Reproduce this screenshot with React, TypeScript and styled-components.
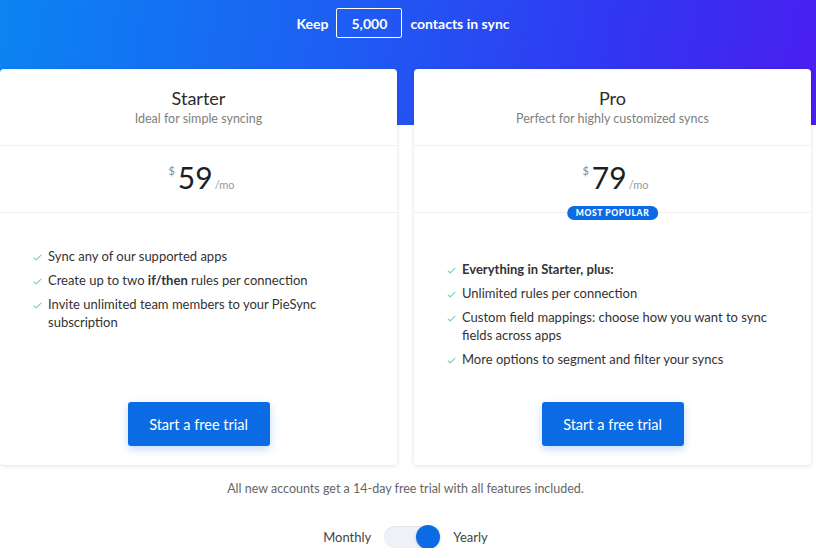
import * as React from "react";
import styled, { createGlobalStyle } from "styled-components";

type Plan = {
  name: string;
  tagline: string;
  price: number;
  popular?: boolean;
  features: React.ReactNode[];
};

const plans: Plan[] = [
  {
    name: "Starter",
    tagline: "Ideal for simple syncing",
    price: 59,
    features: [
      "Sync any of our supported apps",
      <>
        Create up to two <b>if/then</b> rules per connection
      </>,
      "Invite unlimited team members to your PieSync subscription",
    ],
  },
  {
    name: "Pro",
    tagline: "Perfect for highly customized syncs",
    price: 79,
    popular: true,
    features: [
      <b>Everything in Starter, plus:</b>,
      "Unlimited rules per connection",
      "Custom field mappings: choose how you want to sync fields across apps",
      "More options to segment and filter your syncs",
    ],
  },
];

const Check = () => (
  <CheckIcon width="9" height="7" viewBox="0 0 9 7">
    <polyline
      points="0.8,3.6 3.2,5.9 8.3,0.9"
      fill="none"
      stroke="#7fd3b0"
      strokeWidth="1.1"
    />
  </CheckIcon>
);

const App = () => {
  const [yearly, setYearly] = React.useState(true);

  return (
    <>
      <GlobalStyle />
      <Banner>
        <SyncLine>
          Keep <CountInput defaultValue="5,000" /> contacts in sync
        </SyncLine>
      </Banner>
      <Cards>
        {plans.map((plan) => (
          <Card key={plan.name}>
            <CardHead>
              <PlanName>{plan.name}</PlanName>
              <Tagline>{plan.tagline}</Tagline>
            </CardHead>
            <PriceRow>
              <Currency>$</Currency>
              <Amount>{plan.price}</Amount>
              <Period>/mo</Period>
              {plan.popular && <Badge>MOST POPULAR</Badge>}
            </PriceRow>
            <CardBody>
              <Features offset={plan.popular ? 47 : 34}>
                {plan.features.map((feature, i) => (
                  <Feature key={i}>
                    <Check />
                    <span>{feature}</span>
                  </Feature>
                ))}
              </Features>
              <TrialButton>Start a free trial</TrialButton>
            </CardBody>
          </Card>
        ))}
      </Cards>
      <Note>All new accounts get a 14-day free trial with all features included.</Note>
      <Billing>
        <span>Monthly</span>
        <Switch on={yearly} onClick={() => setYearly(!yearly)}>
          <Knob on={yearly} />
        </Switch>
        <span>Yearly</span>
      </Billing>
    </>
  );
};

const GlobalStyle = createGlobalStyle`
  body {
    margin: 0;
    background: #fff;
    font-family: Lato, "Open Sans", sans-serif;
    color: #333;
    overflow: hidden;
  }
`;

const Banner = styled.div`
  height: 125px;
  background: linear-gradient(100deg, #0b84f2 0%, #1d5ff3 40%, #3236f2 75%, #4a1ef0 100%);
  display: flex;
  justify-content: center;
  padding: 8px 10px 0 0;
  box-sizing: border-box;
`;

const SyncLine = styled.div`
  display: flex;
  align-items: center;
  height: 30px;
  gap: 8px;
  color: #fff;
  font-size: 14px;
  font-weight: 700;
`;

const CountInput = styled.input`
  width: 66px;
  height: 30px;
  box-sizing: border-box;
  border: 1px solid #fff;
  border-radius: 2px;
  background: transparent;
  color: #fff;
  font-family: inherit;
  font-size: 14px;
  font-weight: 700;
  text-align: center;
  outline: none;
`;

const Cards = styled.div`
  width: 811px;
  margin-top: -56px;
  display: grid;
  grid-template-columns: 397px 397px;
  column-gap: 17px;
`;

const Card = styled.div`
  background: #fff;
  border-radius: 4px;
  box-shadow: 0 1px 4px rgba(0, 0, 0, 0.13);
  display: flex;
  flex-direction: column;
  height: 396px;
`;

const CardHead = styled.div`
  text-align: center;
  padding: 18px 0 16px;
  border-bottom: 1px solid #f0f0f0;
`;

const PlanName = styled.div`
  font-size: 18px;
  line-height: 22px;
  color: #2b2b2b;
`;

const Tagline = styled.div`
  font-size: 12.5px;
  line-height: 20px;
  color: #808080;
`;

const PriceRow = styled.div`
  position: relative;
  height: 66px;
  display: flex;
  justify-content: center;
  align-items: center;
  border-bottom: 1px solid #f0f0f0;
  padding-left: 6px;
`;

const Currency = styled.span`
  font-size: 11px;
  color: #888;
  align-self: flex-start;
  margin-top: 18px;
  margin-right: 3px;
`;

const Amount = styled.span`
  font-size: 30px;
  font-weight: 400;
  color: #1f1f1f;
  margin-top: -4px;
`;

const Period = styled.span`
  font-size: 11px;
  color: #999;
  margin-top: 10px;
  margin-left: 2px;
`;

const Badge = styled.span`
  position: absolute;
  left: 50%;
  bottom: -8px;
  transform: translateX(-50%);
  background: #0a6be4;
  color: #fff;
  font-size: 8.5px;
  font-weight: 900;
  letter-spacing: 0.6px;
  line-height: 14px;
  padding: 0 9px;
  border-radius: 8px;
  white-space: nowrap;
`;

const CardBody = styled.div`
  flex: 1;
  display: flex;
  flex-direction: column;
  align-items: center;
  padding-bottom: 19px;
`;

const Features = styled.ul<{ offset: number }>`
  list-style: none;
  margin: 0;
  padding: ${(props) => props.offset}px 30px 0 33px;
  align-self: stretch;
  display: flex;
  flex-direction: column;
  gap: 6px;
`;

const Feature = styled.li`
  display: flex;
  align-items: flex-start;
  gap: 6px;
  font-size: 13px;
  line-height: 18px;
  color: #333;

  b {
    font-weight: 700;
  }
`;

const CheckIcon = styled.svg`
  flex: none;
  margin-top: 7px;
`;

const TrialButton = styled.button`
  margin-top: auto;
  width: 142px;
  height: 44px;
  border: none;
  border-radius: 3px;
  background: #0a6be4;
  color: #fff;
  font-family: inherit;
  font-size: 14.5px;
  box-shadow: 0 3px 8px rgba(10, 107, 228, 0.25);
  cursor: pointer;
`;

const Note = styled.p`
  width: 811px;
  margin: 17px 0 0;
  text-align: center;
  font-size: 12.5px;
  line-height: 14px;
  color: #666;
`;

const Billing = styled.div`
  width: 811px;
  margin-top: 30px;
  display: flex;
  justify-content: center;
  align-items: center;
  gap: 13px;
  font-size: 13px;
  color: #444;
`;

const Switch = styled.div<{ on: boolean }>`
  width: 56px;
  height: 22px;
  border-radius: 11px;
  background: #eef1f6;
  box-shadow: inset 0 1px 2px rgba(0, 0, 0, 0.06);
  display: flex;
  align-items: center;
  justify-content: ${(props) => (props.on ? "flex-end" : "flex-start")};
  cursor: pointer;
`;

const Knob = styled.div<{ on: boolean }>`
  width: 24px;
  height: 24px;
  border-radius: 50%;
  background: ${(props) => (props.on ? "#0a6be4" : "#fff")};
  box-shadow: 0 1px 3px rgba(0, 0, 0, 0.2);
`;

export default App;
